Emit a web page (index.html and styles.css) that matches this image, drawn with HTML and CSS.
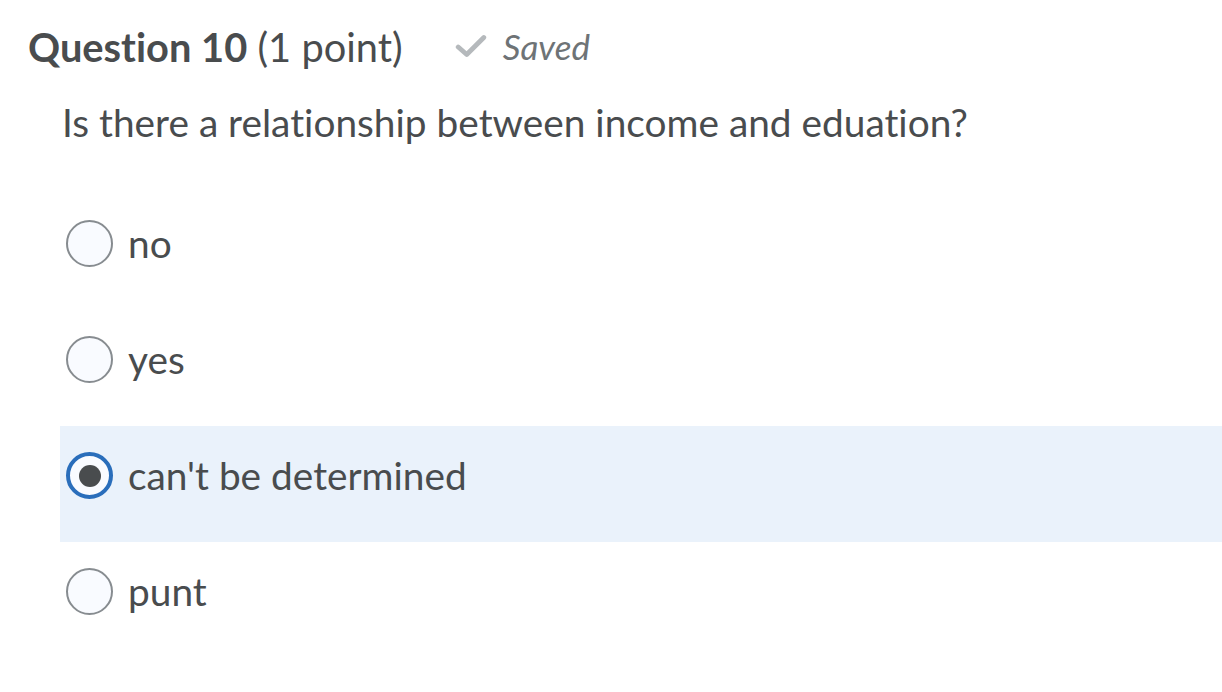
FILE: index.html
```html
<!DOCTYPE html>
<html>
<head>
<meta charset="utf-8">
<link rel="stylesheet" href="styles.css">
</head>
<body>
<div class="question">
  <div class="header">
    <h2 class="title"><strong>Question 10</strong> <span class="points">(1 point)</span></h2>
    <div class="saved">
      <svg class="check" viewBox="0 0 30 24" width="32" height="26"><path d="M3 13 L11 20 L27 4" fill="none" stroke="#b5b9bc" stroke-width="4.5" stroke-linecap="round" stroke-linejoin="round"/></svg>
      <span>Saved</span>
    </div>
  </div>
  <p class="prompt">Is there a relationship between income and eduation?</p>
  <div class="options">
    <label class="option"><span class="radio"></span><span class="label">no</span></label>
    <label class="option"><span class="radio"></span><span class="label">yes</span></label>
    <label class="option selected"><span class="radio checked"></span><span class="label">can't be determined</span></label>
    <label class="option"><span class="radio"></span><span class="label">punt</span></label>
  </div>
</div>
</body>
</html>
```
FILE: styles.css
```css
html, body {
  margin: 0;
  padding: 0;
  background: #ffffff;
}
body {
  font-family: Lato, "Open Sans", sans-serif;
  color: #494c4e;
  font-variant-ligatures: none;
  font-feature-settings: "liga" 0, "clig" 0, "calt" 0, "dlig" 0;
  letter-spacing: 0.01px;
}
.question {
  padding: 18px 0 0 28px;
}
.header {
  display: flex;
  align-items: center;
  gap: 52px;
  height: 56px;
}
.title {
  margin: 0;
  font-size: 39.8px;
  font-weight: 400;
  color: #494c4e;
}
.title strong {
  font-weight: 700;
}
.saved {
  display: flex;
  align-items: center;
  gap: 16px;
  font-style: italic;
  font-size: 35px;
  color: #6e7376;
}
.prompt {
  margin: 18px 0 0 34px;
  font-size: 38.8px;
  line-height: 60px;
}
.options {
  margin-top: 42px;
  margin-left: 32px;
}
.option {
  display: flex;
  align-items: flex-start;
  gap: 15px;
  height: 116px;
  box-sizing: border-box;
  padding: 26px 0 0 6px;
  font-size: 38.8px;
}
.option.selected {
  background: #eaf2fb;
}
.radio {
  box-sizing: border-box;
  width: 47px;
  height: 47px;
  border-radius: 50%;
  border: 2px solid #878c90;
  background: #f9fbff;
  display: flex;
  align-items: center;
  justify-content: center;
  flex: none;
}
.radio.checked {
  border: 4px solid #2a6ebb;
}
.radio.checked::after {
  content: "";
  width: 22px;
  height: 22px;
  border-radius: 50%;
  background: #494c4e;
}
.label {
  line-height: 47px;
}
```
